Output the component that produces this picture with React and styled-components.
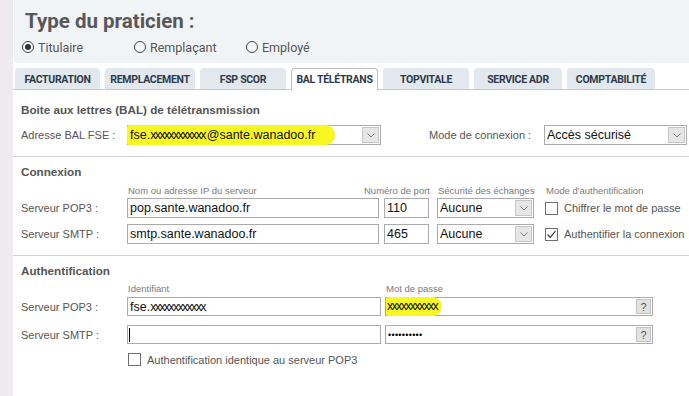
import React from "react";
import styled, { createGlobalStyle } from "styled-components";

const GlobalStyle = createGlobalStyle`
  html, body {
    margin: 0;
    padding: 0;
    background: #fff;
  }
  body {
    font-family: "Liberation Sans", Arial, sans-serif;
  }
`

const Page = styled.div`
  display: flex;
  width: 689px;
  height: 396px;
  overflow: hidden;
`
const Strip = styled.div`
  flex: 0 0 13px;
  background: #eeeaee;
`
const Main = styled.div`
  flex: 1;
  display: flex;
  flex-direction: column;
`
const Header = styled.div`
  margin-left: 1px;
  height: 63px;
  box-sizing: border-box;
  padding: 9px 0 0 8px;
  background: #f1f4f6;
`
const Title = styled.h1`
  margin: 0 0 0 3px;
  font-family: Roboto, "Liberation Sans", sans-serif;
  font-size: 20.5px;
  font-weight: 700;
  line-height: 24px;
  color: #585858;
`
const RadioRow = styled.div`
  display: grid;
  grid-template-columns: repeat(3, 112px);
  margin-top: 6px;
`
const RadioItem = styled.label`
  display: flex;
  align-items: center;
  gap: 4px;
  height: 16px;
  font-family: Roboto, "Liberation Sans", sans-serif;
  font-size: 12.5px;
  color: #555;
`
const RadioDot = styled.span`
  box-sizing: border-box;
  width: 12px;
  height: 12px;
  border-radius: 50%;
  border: 1px solid #444;
  display: flex;
  align-items: center;
  justify-content: center;

  &::after {
    content: "";
    width: 6px;
    height: 6px;
    border-radius: 50%;
    background: ${p => (p.$on ? "#333" : "transparent")};
  }
`
const Tabs = styled.div`
  display: flex;
  align-items: flex-end;
  gap: 5px;
  margin-top: 5px;
  padding-left: 2px;
  border-bottom: 1px solid #c9c9c9;
`
const Tab = styled.div`
  box-sizing: border-box;
  width: ${p => p.$w}px;
  height: ${p => (p.$active ? 22 : 21)}px;
  margin-bottom: ${p => (p.$active ? -1 : 0)}px;
  border: 1px solid ${p => (p.$active ? "#bdbdbd" : "transparent")};
  border-bottom: none;
  border-radius: 4px 4px 0 0;
  background: ${p => (p.$active ? "#fff" : "#e2e8ed")};
  display: flex;
  align-items: center;
  justify-content: center;
  font-family: Roboto, "Liberation Sans", sans-serif;
  font-size: 10.5px;
  font-weight: 700;
  letter-spacing: -0.3px;
  color: #2d3a4b;
  padding-bottom: ${p => (p.$active ? 1 : 0)}px;
`
const Section = styled.section`
  padding: ${p => p.$top}px 0 ${p => p.$bottom}px 8px;
  border-bottom: ${p => (p.$last ? "none" : "1px solid #cfcfcf")};
`
const SectionTitle = styled.h2`
  margin: 0;
  font-size: 11.7px;
  font-weight: 700;
  line-height: 16px;
  color: #555;
`
const Grid = styled.div`
  display: grid;
  grid-template-columns: ${p => p.$cols};
  align-items: center;
  margin-top: ${p => p.$mt}px;
`
const Label = styled.div`
  font-size: 11px;
  color: #555;
  white-space: nowrap;
`
const SubLabel = styled.div`
  height: 12px;
  line-height: 12px;
  font-size: 9.5px;
  color: #7a7a7a;
  white-space: nowrap;
  padding-left: 1px;
  display: flex;
  justify-content: ${p => (p.$right ? "flex-end" : "flex-start")};
  width: ${p => (p.$w ? p.$w + "px" : "auto")};
`
const Field = styled.div`
  box-sizing: border-box;
  display: flex;
  align-items: center;
  width: ${p => p.$w}px;
  height: ${p => p.$h || 20}px;
  border: 1px solid #ababab;
  background: #fff;
  padding-left: 2px;
  font-size: 12.5px;
  color: #111;
  white-space: nowrap;
`
const ArrowBox = styled.span`
  box-sizing: border-box;
  margin-left: auto;
  margin-right: 1px;
  width: 17px;
  height: 16px;
  border: 1px solid #c6c6c6;
  background: #e6e6e6;
  display: flex;
  align-items: center;
  justify-content: center;
`
const HelpBox = styled.span`
  box-sizing: border-box;
  margin-left: auto;
  margin-right: 1px;
  width: 15px;
  height: 15px;
  border: 1px solid #c2c2c2;
  background: #e2e2e2;
  display: flex;
  align-items: center;
  justify-content: center;
  font-size: 11px;
  color: #555;
`
const Mask = styled.span`
  letter-spacing: -1.7px;
  margin-right: 2px;
`
const Marker = styled.span`
  background: #f7f722;
  margin-left: ${p => p.$ml || 0}px;
  padding: ${p => p.$pad};
  border-radius: 3px 9px 9px 3px;
`
const Caret = styled.span`
  width: 1px;
  height: 14px;
  background: #000;
  margin-left: -1px;
`
const Dots = styled.span`
  font-size: 9px;
  letter-spacing: 0.3px;
  color: #000;
`
const Check = styled.label`
  display: flex;
  align-items: center;
  gap: 6px;
  font-size: 11px;
  color: #555;
  white-space: nowrap;
  margin-left: ${p => p.$ml || 0}px;
`
const Box = styled.span`
  box-sizing: border-box;
  width: 13px;
  height: 13px;
  border: 1px solid #707070;
  background: #fff;
  display: flex;
  align-items: center;
  justify-content: center;
`
const Inline = styled.div`
  display: flex;
  align-items: center;
`
const ModeLabel = styled(Label)`
  width: 115px;
  margin-left: 48px;
`

const Chevron = () => (
  <svg width="8" height="5" viewBox="0 0 8 5">
    <polyline points="0.5,0.5 4,4 7.5,0.5" fill="none" stroke="#7a7a7a" strokeWidth="1" />
  </svg>
)

const Select = ({ w, children }) => (
  <Field $w={w}>
    {children}
    <ArrowBox><Chevron /></ArrowBox>
  </Field>
)

const CheckBox = ({ on, children, ml }) => (
  <Check $ml={ml}>
    <Box>
      {on && (
        <svg width="11" height="11" viewBox="0 0 11 11">
          <polyline points="1.5,5.5 4.2,8.3 9.5,2.2" fill="none" stroke="#333" strokeWidth="1.2" />
        </svg>
      )}
    </Box>
    {children}
  </Check>
)

const tabs = [
  ["FACTURATION", 85],
  ["REMPLACEMENT", 90],
  ["FSP SCOR", 86],
  ["BAL TÉLÉTRANS", 87],
  ["TOPVITALE", 86],
  ["SERVICE ADR", 88],
  ["COMPTABILITÉ", 88],
]

const colsConnexion = "106px 257px 53px 108px 1fr"
const colsAuth = "106px 258px 1fr"

const App = () => {
  return (
    <Page>
      <GlobalStyle />
      <Strip />
      <Main>
        <Header>
          <Title>Type du praticien :</Title>
          <RadioRow>
            <RadioItem><RadioDot $on />Titulaire</RadioItem>
            <RadioItem><RadioDot />Remplaçant</RadioItem>
            <RadioItem><RadioDot />Employé</RadioItem>
          </RadioRow>
        </Header>

        <Tabs>
          {tabs.map(([nom, w]) => (
            <Tab key={nom} $w={w} $active={nom === "BAL TÉLÉTRANS"}>{nom}</Tab>
          ))}
        </Tabs>

        <Section $top={12} $bottom={11}>
          <SectionTitle>Boite aux lettres (BAL) de télétransmission</SectionTitle>
          <Grid $cols="106px 1fr" $mt={7}>
            <Label>Adresse BAL FSE :</Label>
            <Inline>
              <Select w={254}>
                <Marker $ml={-3} $pad="3px 20px 3px 3px">fse.<Mask>xxxxxxxxxxxx</Mask>@sante.wanadoo.fr</Marker>
              </Select>
              <ModeLabel>Mode de connexion :</ModeLabel>
              <Select w={143}>Accès sécurisé</Select>
            </Inline>
          </Grid>
        </Section>

        <Section $top={7} $bottom={11}>
          <SectionTitle>Connexion</SectionTitle>
          <Grid $cols={colsConnexion} $mt={5}>
            <span />
            <SubLabel>Nom ou adresse IP du serveur</SubLabel>
            <SubLabel $right $w={45}>Numéro de port</SubLabel>
            <SubLabel>Sécurité des échanges</SubLabel>
            <SubLabel>Mode d'authentification</SubLabel>
          </Grid>
          <Grid $cols={colsConnexion} $mt={1}>
            <Label>Serveur POP3 :</Label>
            <Field $w={252}>pop.sante.wanadoo.fr</Field>
            <Field $w={45}>110</Field>
            <Select w={97}>Aucune</Select>
            <CheckBox>Chiffrer le mot de passe</CheckBox>
          </Grid>
          <Grid $cols={colsConnexion} $mt={6}>
            <Label>Serveur SMTP :</Label>
            <Field $w={252}>smtp.sante.wanadoo.fr</Field>
            <Field $w={45}>465</Field>
            <Select w={97}>Aucune</Select>
            <CheckBox on>Authentifier la connexion</CheckBox>
          </Grid>
        </Section>

        <Section $top={7} $bottom={0} $last>
          <SectionTitle>Authentification</SectionTitle>
          <Grid $cols={colsAuth} $mt={4}>
            <span />
            <SubLabel>Identifiant</SubLabel>
            <SubLabel>Mot de passe</SubLabel>
          </Grid>
          <Grid $cols={colsAuth} $mt={2}>
            <Label>Serveur POP3 :</Label>
            <Field $w={254} $h={19}>fse.<Mask>xxxxxxxxxxxx</Mask></Field>
            <Field $w={268} $h={19}>
              <Marker $ml={-2} $pad="2px 3px 3px 1px"><Mask>xxxxxxxxxxx</Mask></Marker>
              <HelpBox>?</HelpBox>
            </Field>
          </Grid>
          <Grid $cols={colsAuth} $mt={9}>
            <Label>Serveur SMTP :</Label>
            <Field $w={254} $h={19}><Caret /></Field>
            <Field $w={268} $h={19}>
              <Dots>••••••••••</Dots>
              <HelpBox>?</HelpBox>
            </Field>
          </Grid>
          <Grid $cols={colsAuth} $mt={9}>
            <span />
            <CheckBox ml={1}>Authentification identique au serveur POP3</CheckBox>
          </Grid>
        </Section>
      </Main>
    </Page>
  )
}

export default App
